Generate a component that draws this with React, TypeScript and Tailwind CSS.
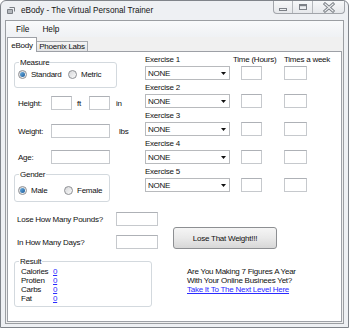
import React from "react";

const B = "text-[8px] leading-[9px] tracking-[-0.25px] whitespace-nowrap";
const T = `${B} text-[#111111]`;
const L = `${B} text-[#2b2bff] underline`;

function TextBox({ w }: { w: string }) {
  return <div className={`${w} h-[14px] shrink-0 bg-white border border-[#c6c9cd] border-t-[#aeb1b6]`} />;
}

function Radio({ checked }: { checked?: boolean }) {
  return (
    <div className="w-[9px] h-[9px] shrink-0 rounded-full border border-[#8e9094] bg-linear-to-br from-[#d6d7d9] to-[#fbfbfb] flex items-center justify-center">
      {checked && <div className="w-[5px] h-[5px] rounded-full bg-linear-to-br from-[#6fb4e6] to-[#1b5a98]" />}
    </div>
  );
}

function Group({ label, className, children }: { label: string; className: string; children: React.ReactNode }) {
  return (
    <div className={`relative border border-[#d3d9de] rounded-[3px] ${className}`}>
      <span className={`absolute left-[4px] -top-[5px] bg-white px-[1px] ${T}`}>{label}</span>
      {children}
    </div>
  );
}

function Combo() {
  return (
    <div className="w-[85px] h-[14px] shrink-0 border border-[#b8babd] bg-white flex items-center justify-between pl-[2px] pr-[3px]">
      <span className={T}>NONE</span>
      <svg width="5" height="3" viewBox="0 0 5 3">
        <path d="M0 0H5L2.5 3Z" fill="#111" />
      </svg>
    </div>
  );
}

export default function App() {
  const exercises = [1, 2, 3, 4, 5];
  return (
    <div className="w-[350px] h-[328px] bg-white overflow-hidden font-['Liberation_Sans',Arial,sans-serif]">
      <div className="w-[349px] h-[328px] border border-[#80848a] rounded-t-[6px] bg-[#eef0f3] flex flex-col">
        {/* Title bar */}
        <div className="h-[19px] shrink-0 flex items-start">
          <div className="h-[19px] flex items-center">
            <svg className="ml-[6px]" width="8" height="7" viewBox="0 0 8 7">
              <path d="M0.5 2.5H5.5V6.5H0.5Z" fill="#b4b8bd" stroke="#7a7e84" />
              <path d="M2.5 0.5H7.5V4.5" fill="none" stroke="#7a7e84" />
            </svg>
            <span className="ml-[6px] text-[8.2px] leading-[10px] text-[#151515] whitespace-nowrap">
              eBody - The Virtual Personal Trainer
            </span>
          </div>
          <div className="ml-auto mr-[3px] w-[72px] h-[13px] flex border border-t-0 border-[#a2a5aa] rounded-b-[4px] bg-linear-to-b from-[#f7f8f9] to-[#e6e8eb] overflow-hidden">
            <div className="w-[19px] h-full border-r border-[#b4b7bb] flex items-center justify-center">
              <svg width="10" height="12" viewBox="0 0 10 12">
                <rect x="1.5" y="7.5" width="7" height="2" fill="#eceef0" stroke="#7d8187" />
              </svg>
            </div>
            <div className="w-[20px] h-full border-r border-[#b4b7bb] flex items-center justify-center">
              <svg width="10" height="12" viewBox="0 0 10 12">
                <rect x="1.5" y="3.5" width="7" height="5" fill="#eceef0" stroke="#7d8187" />
                <rect x="2" y="4" width="6" height="1.2" fill="#7d8187" />
              </svg>
            </div>
            <div className="flex-1 h-full flex items-center justify-center">
              <svg width="12" height="11" viewBox="0 0 12 11">
                <path d="M2 2L10 9M10 2L2 9" stroke="#7d8187" strokeWidth="3" strokeLinecap="square" />
                <path d="M2 2L10 9M10 2L2 9" stroke="#eef0f2" strokeWidth="1.2" strokeLinecap="square" />
              </svg>
            </div>
          </div>
        </div>

        {/* Client area */}
        <div className="ml-[4px] w-[339px] h-[304px] shrink-0 border border-[#9b9ea2] bg-[#f0f0f0] flex flex-col">
          {/* Menu */}
          <div className="h-[16px] shrink-0 flex items-center bg-linear-to-b from-[#f9fafb] to-[#eff1f4] text-[8.3px] leading-[10px] text-[#111111]">
            <span className="ml-[10px]">File</span>
            <span className="ml-[13px]">Help</span>
          </div>

          {/* Tabs */}
          <div className="h-[14px] shrink-0 flex items-end">
            <div className="relative z-10 ml-[1px] w-[30px] h-[15px] -mb-[1px] bg-white border border-b-0 border-[#9da0a6] flex items-center justify-center">
              <span className={T}>eBody</span>
            </div>
            <div className="w-[51px] h-[10px] border border-b-0 border-l-0 border-[#a7aaaf] bg-linear-to-b from-[#f5f5f5] to-[#e3e4e6] flex items-center justify-center">
              <span className={T}>Phoenix Labs</span>
            </div>
          </div>

          {/* Tab page */}
          <div className="ml-[1px] w-[335px] h-[271px] shrink-0 border border-[#9da0a6] bg-white flex flex-col">
            {/* Top section */}
            <div className="flex items-start">
              {/* Left column */}
              <div className="ml-[6px] w-[131px] shrink-0 flex flex-col">
                <Group label="Measure" className="mt-[10px] w-[103px] h-[26px]">
                  <div className="mt-[7px] ml-[3px] h-[9px] flex items-center">
                    <div className="w-[50px] flex items-center">
                      <Radio checked />
                      <span className={`ml-[4px] ${T}`}>Standard</span>
                    </div>
                    <Radio />
                    <span className={`ml-[4px] ${T}`}>Metric</span>
                  </div>
                </Group>

                <div className="mt-[8px] h-[14px] flex items-center">
                  <span className={`w-[37px] pl-[4px] ${T}`}>Height:</span>
                  <TextBox w="w-[21px]" />
                  <span className={`w-[17px] pl-[5px] ${T}`}>ft</span>
                  <TextBox w="w-[21px]" />
                  <span className={`pl-[6px] ${T}`}>in</span>
                </div>

                <div className="mt-[14px] h-[14px] flex items-center">
                  <span className={`w-[37px] pl-[4px] ${T}`}>Weight:</span>
                  <TextBox w="w-[59px]" />
                  <span className={`pl-[9px] ${T}`}>lbs</span>
                </div>

                <div className="mt-[12px] h-[14px] flex items-center">
                  <span className={`w-[37px] pl-[4px] ${T}`}>Age:</span>
                  <TextBox w="w-[59px]" />
                </div>

                <Group label="Gender" className="mt-[10px] w-[96px] h-[28px]">
                  <div className="mt-[11px] ml-[3px] h-[9px] flex items-center">
                    <div className="w-[46px] flex items-center">
                      <Radio checked />
                      <span className={`ml-[4px] ${T}`}>Male</span>
                    </div>
                    <Radio />
                    <span className={`ml-[4px] ${T}`}>Female</span>
                  </div>
                </Group>
              </div>

              {/* Right column: exercises */}
              <div className="flex flex-col">
                {exercises.map((n, i) => (
                  <div key={n} className="mt-[3px] flex flex-col">
                    <div className="h-[9px] flex">
                      <span className={`w-[88px] ${T}`}>Exercise {n}</span>
                      {i === 0 && (
                        <>
                          <span className={`w-[51px] ${T}`}>Time (Hours)</span>
                          <span className={T}>Times a week</span>
                        </>
                      )}
                    </div>
                    <div className="mt-[2px] flex items-center">
                      <Combo />
                      <div className="ml-[11px]">
                        <TextBox w="w-[21px]" />
                      </div>
                      <div className="ml-[22px]">
                        <TextBox w="w-[23px]" />
                      </div>
                    </div>
                  </div>
                ))}
              </div>
            </div>

            {/* Bottom section */}
            <div className="flex items-start">
              <div className="ml-[6px] w-[159px] shrink-0 flex flex-col">
                <div className="mt-[10px] h-[14px] flex items-center">
                  <span className={`w-[102px] pl-[3px] ${T}`}>Lose How Many Pounds?</span>
                  <TextBox w="w-[42px]" />
                </div>
                <div className="mt-[9px] h-[14px] flex items-center">
                  <span className={`w-[102px] pl-[3px] ${T}`}>In How Many Days?</span>
                  <TextBox w="w-[42px]" />
                </div>
                <Group label="Result" className="mt-[12px] w-[138px] h-[46px]">
                  <div className="pt-[5px] pl-[6px] flex flex-col">
                    {["Calories", "Protien", "Carbs", "Fat"].map((r) => (
                      <div key={r} className="h-[9px] flex">
                        <span className={`w-[32px] ${T}`}>{r}</span>
                        <span className={L}>0</span>
                      </div>
                    ))}
                  </div>
                </Group>
              </div>

              <div className="flex flex-col">
                <button className="mt-[25px] w-[104px] h-[22px] rounded-[3px] border border-[#8d8f92] bg-linear-to-b from-[#f5f5f5] via-[#e9e9e9] to-[#d7d7d7] flex items-center justify-center">
                  <span className={T}>Lose That Weight!!!</span>
                </button>
                <div className="mt-[18px] ml-[14px] flex flex-col">
                  <span className={T}>Are You Making 7 Figures A Year</span>
                  <span className={T}>With Your Online Businees Yet?</span>
                  <span className={L}>Take It To The Next Level Here</span>
                </div>
              </div>
            </div>
          </div>
        </div>
      </div>
    </div>
  );
}
